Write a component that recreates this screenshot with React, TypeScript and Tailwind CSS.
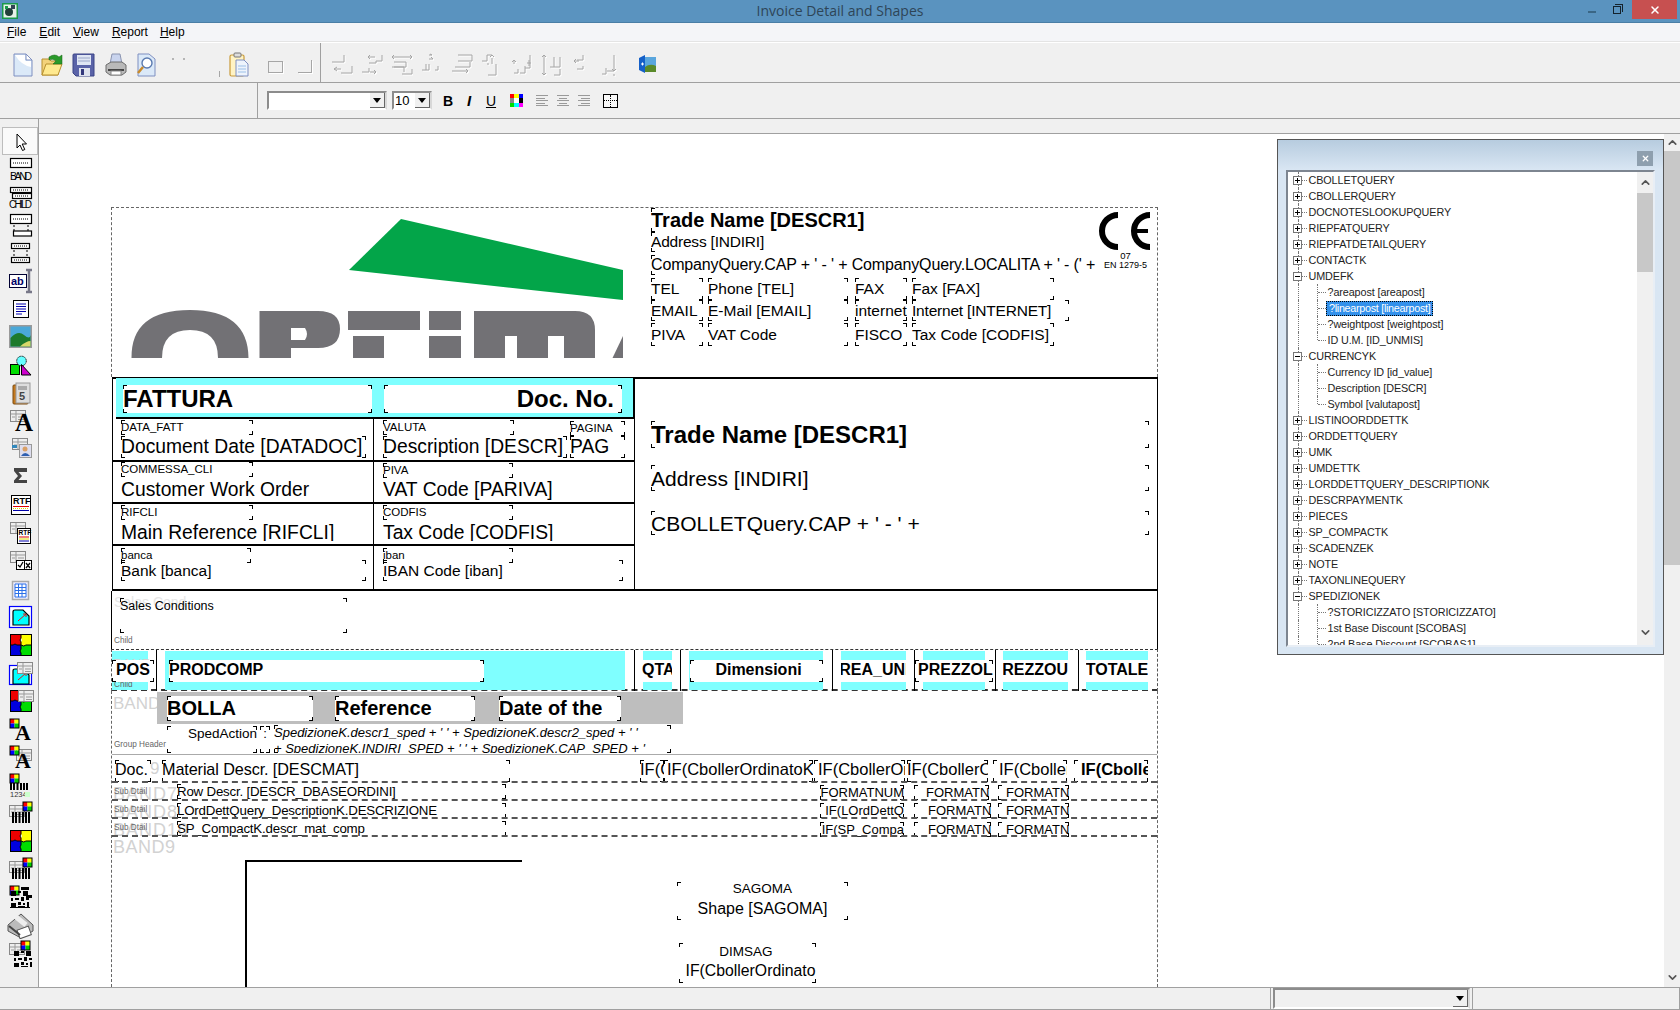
import type { ReactNode } from 'react'
import { ChevronUp, ChevronDown, X } from 'lucide-react'

// small pieces shared by the palette icons (28x28 cell)
const Form = ({ x, y }: { x: number; y: number }) => (
  <g transform={`translate(${x} ${y})`}>
    <rect x="0.5" y="0.5" width="15" height="11" fill="#eee" stroke="#888" />
    <path d="M1 4H15M6 1V11M8 7H14M2 7H5M8 9.5H14" stroke="#999" fill="none" />
  </g>
)
const Four = ({ x, y }: { x: number; y: number }) => (
  <g transform={`translate(${x} ${y})`}>
    <rect width="4.5" height="4.5" fill="#f00" />
    <rect x="4.5" width="4.5" height="4.5" fill="#ff0" />
    <rect y="4.5" width="4.5" height="4.5" fill="#00f" />
    <rect x="4.5" y="4.5" width="4.5" height="4.5" fill="#0c0" />
    <rect x="0" y="0" width="9" height="9" fill="none" stroke="#000" />
  </g>
)
const Puzzle = () => (
  <g>
    <path d="M4 3H15V7Q13 9 15 11V14H11Q9 12 7 14H4Z" fill="#e00" />
    <path d="M15 3H26V14H20Q18 16 15 14V11Q17 9 15 7Z" fill="#ff0" />
    <path d="M4 14H7Q9 12 11 14H15V25H4Z" fill="#00d" />
    <path d="M15 14Q18 16 20 14H26V25H15V22Q13 20 15 18Z" fill="#0d0" />
    <rect x="4.5" y="3.5" width="21" height="21" fill="none" stroke="#000" />
    <path d="M15 3V7Q13 9 15 11V14H11Q9 12 7 14H4M15 14Q18 16 20 14H26M15 14V18Q13 20 15 22V25" stroke="#000" fill="none" />
  </g>
)
const BigA = ({ x, y, s = 24 }: { x: number; y: number; s?: number }) => (
  <text x={x} y={y} fontSize={s} fontWeight="700" fontFamily="'Liberation Serif',serif" fill="#000">A</text>
)
const Bars = ({ x, y, h = 11 }: { x: number; y: number; h?: number }) => (
  <path
    transform={`translate(${x} ${y})`}
    d={`M1 0V${h}M4 0V${h}M7.5 0V${h}M11 0V${h}M14 0V${h}M17 0V${h}`}
    stroke="#000"
    strokeWidth="2"
  />
)
const Cyan = () => (
  <g>
    <path d="M7 9Q7 7 9 7H17L23 13V22H7Z" fill="#0ff" stroke="#000" strokeWidth="1.2" />
    <path d="M12 18L20 11M20 11H17M20 11V14" stroke="#e11" fill="none" />
  </g>
)
const Band = ({ y, x = 4, w = 22, h = 10 }: { y: number; x?: number; w?: number; h?: number }) => (
  <g>
    <rect x={x + 0.5} y={y + 0.5} width={w - 1} height={h - 1} fill="#fff" stroke="#000" strokeWidth="1.2" />
    <path d={`M${x + 3} ${y + h / 2}H${x + w - 3}`} stroke="#000" strokeDasharray="1 1" />
  </g>
)
const Qr = ({ x, y }: { x: number; y: number }) => (
  <path
    transform={`translate(${x} ${y})`}
    d="M0 0h5v5h-5zM7 0h3v2h-3zM12 0h5v5h-5zM0 7h2v3h-2zM4 7h4v2h-4zM10 6h3v4h-3zM15 7h3v2h-3zM0 12h5v5h-5zM7 11h3v3h-3zM12 12h2v2h-2zM16 11h2v6h-2zM7 15h7v2h-7z"
    fill="#000"
  />
)

const Cell = ({ children }: { children: ReactNode }) => (
  <svg width="28" height="28" viewBox="0 0 28 28">{children}</svg>
)

const PALETTE: ReactNode[] = [
  <path key="a" d="M11 7V21L14 18L16.5 23.5L18.8 22.5L16.2 17H20.5Z" fill="#fff" stroke="#000" />,
  <g key="b"><Band y={3} /><text x="4" y="25" fontSize="10.5" fontFamily="'Liberation Sans',sans-serif" textLength="22" fill="#000">BAND</text></g>,
  <g key="c"><Band y={4} h={6} /><Band x={6} w={20} y={10} h={6} /><text x="3" y="24.5" fontSize="10" fontFamily="'Liberation Sans',sans-serif" textLength="23" fill="#000">CHILD</text></g>,
  <g key="d"><Band y={3} h={10} /><path d="M8 14V20M22 14V20" stroke="#000" strokeDasharray="2 2" /><rect x="7.5" y="20" width="18" height="5" fill="#fff" stroke="#000" strokeWidth="1.2" /></g>,
  <g key="e"><Band x={5} w={19} y={4} h={6} /><path d="M8 11V18M21 11V18" stroke="#000" strokeDasharray="2 2" /><Band x={5} w={19} y={18} h={6} /></g>,
  <g key="f"><rect x="3.5" y="7.5" width="17" height="13" fill="#fff" stroke="#003" /><text x="5" y="18" fontSize="11" fontWeight="700" fontFamily="'Liberation Sans',sans-serif" fill="#006">ab</text><path d="M20 3H26M20 25H26M23 3V25" stroke="#778" strokeWidth="2.5" fill="none" /></g>,
  <g key="g"><rect x="7.5" y="5.5" width="15" height="17" fill="#fff" stroke="#000" /><path d="M10 9H20M10 11.5H20M10 14H20M10 16.5H20M10 19H16" stroke="#00a" /></g>,
  <g key="h"><rect x="3" y="2" width="23" height="23" fill="#9a9a9a" /><rect x="4.5" y="3.5" width="20" height="20" fill="#4aa8d8" /><path d="M4.5 15Q12 7 18 12T24.5 12V23.5H4.5Z" fill="#1d7a2c" /><path d="M14 23.5Q20 18 24.5 18V23.5Z" fill="#d8d86a" /></g>,
  <g key="i"><rect x="4.5" y="13.5" width="9" height="10" fill="#0d0" stroke="#000" /><circle cx="15.5" cy="10" r="4.8" fill="#6ff" stroke="#000" strokeDasharray="1 .6" /><path d="M15.5 13.5L25 24H15.5Z" fill="#c0c" stroke="#000" /></g>,
  <g key="j"><rect x="7" y="6" width="15" height="19" rx="1" fill="#c67a1e" stroke="#7a4a10" /><rect x="10" y="4" width="14" height="20" fill="#ddd" stroke="#999" /><text x="13" y="21" fontSize="11" fontWeight="700" fontFamily="'Liberation Sans',sans-serif" fill="#444">5</text><path d="M12 8H21M12 10H21" stroke="#777" /></g>,
  <g key="k"><Form x={4} y={3} /><BigA x={9} y={24} s={25} /></g>,
  <g key="l"><Form x={6} y={3} /><rect x="13.5" y="9.5" width="12" height="13" fill="#dde" stroke="#999" /><circle cx="19" cy="14" r="2.5" fill="#d9a066" /><path d="M15 21Q19 15 24 21Z" fill="#3060b0" /><rect x="6" y="10" width="5" height="3" fill="#38b" /></g>,
  <path key="m" d="M8 5H21V9L12.5 9L16 13L12.5 17H21V20H8V17.5L12 13L8 8Z" fill="#444" />,
  <g key="n"><rect x="5.5" y="4.5" width="19" height="19" fill="#fff" stroke="#000" /><text x="7" y="13" fontSize="9" fontWeight="700" fontFamily="'Liberation Sans',sans-serif" fill="#000">RTF</text><path d="M7 15.5H23" stroke="#d00" /><path d="M7 17.5H23" stroke="#dd0" strokeDasharray="1 1" /><path d="M7 19.5H23" stroke="#00a" /></g>,
  <g key="o"><Form x={4} y={3} /><rect x="11.5" y="9.5" width="13" height="15" fill="#fff" stroke="#000" /><text x="12.5" y="16" fontSize="6.5" fontWeight="700" fontFamily="'Liberation Sans',sans-serif" fill="#000">RTF</text><path d="M13 18H23" stroke="#d00" /><path d="M13 20H23" stroke="#dd0" /><path d="M13 22H23" stroke="#00a" /></g>,
  <g key="p"><Form x={4} y={4} /><rect x="10.5" y="13.5" width="8" height="9" fill="#fff" stroke="#000" /><rect x="18.5" y="13.5" width="7" height="9" fill="#fff" stroke="#000" /><path d="M12 18L14 20L17 15M20 16L24 21M24 16L20 21" stroke="#000" fill="none" strokeWidth="1.3" /></g>,
  <g key="q"><rect x="6.5" y="6.5" width="16" height="18" fill="#eef" stroke="#aaa" strokeWidth="1.5" /><path d="M9 9H20V22H9ZM9 12.5H20M9 15.5H20M9 18.5H20M12.5 9V22M16 9V22" stroke="#2a6fe8" fill="#fff" /></g>,
  <g key="r"><rect x="3.5" y="3.5" width="22" height="21" fill="#fff" stroke="#00f" strokeWidth="1.2" /><Cyan /></g>,
  <g key="s"><Puzzle /></g>,
  <g key="t"><rect x="3.5" y="6.5" width="22" height="19" fill="#fff" stroke="#00f" strokeWidth="1.2" /><g transform="translate(0 3)"><Cyan /></g><Form x={11} y={3} /></g>,
  <g key="u"><Puzzle /><Form x={12} y={3} /></g>,
  <g key="v"><Four x={4} y={4} /><BigA x={9} y={25} s={22} /></g>,
  <g key="w"><Form x={10} y={6} /><Four x={4} y={3} /><BigA x={9} y={25} s={22} /></g>,
  <g key="x"><Four x={4} y={3} /><Bars x={4} y={12} h={7} /><text x="4" y="26" fontSize="7.5" fontFamily="'Liberation Sans',sans-serif" fill="#333">1234</text><rect x="19" y="21" width="5" height="5" fill="#cfc" /></g>,
  <g key="y"><Form x={3} y={6} /><Bars x={6} y={13} /><Four x={17} y={3} /></g>,
  <g key="z"><Puzzle /></g>,
  <g key="aa"><Form x={3} y={6} /><Bars x={6} y={13} /><Four x={17} y={3} /></g>,
  <g key="ab"><Four x={4} y={3} /><Qr x={5} y={8} /><path d="M15 4h8v3h-8zM20 12h6v3h-6zM4 24h20v1H4z" fill="#000" /></g>,
  <g key="ac"><path d="M2 14L15 3L27 14V20L15 27L2 20Z" fill="#bbb" stroke="#555" /><path d="M10 6L20 14" stroke="#eee" strokeWidth="5" /><rect x="12" y="17" width="12" height="9" fill="#fff" stroke="#555" transform="rotate(-20 18 21)" /><path d="M3 15L14 24" stroke="#444" strokeWidth="2" /></g>,
  <g key="ad"><Form x={3} y={4} /><Qr x={8} y={12} /><Four x={15} y={2} /></g>,
]

// disabled alignment buttons, drawn with a white emboss behind the gray strokes
const ALIGN: string[] = [
  'M0 7H12V0M2 14H9M2 14L5 12M2 14L5 16M9 18H20V11',
  'M6 2H13M6 2L8 0M6 2L8 4M20 0V6H14V8H7M0 17H7V13M8 17H14M14 17L12 15M14 17L12 19',
  'M0 2H20M0 2L2 0M0 2L2 4M20 2L18 0M20 2L18 4M2 7H14V12H2M0 12H12V17M10 19H20V14',
  'M7 0H10M10 0L8 -1M7 4H11M11 4L9 2M0 15H7V9M4 9V15M16 11V15H13',
  'M6 0H20V6H6M0 16H16M16 16L14 14M16 16L14 18M3 12H18V7',
  'M0 6H5V0H10M10 0L8 2M10 0L12 2M10 3V9M6 8V10M14 9V20H6',
  'M2 5V9M2 5L0 7M2 5L4 7M2 18H6V14M8 18H13V11M13 13H18V0M15 8H19M17 5V11',
  'M2 0V20M2 0L0 2M2 0L4 2M2 20L0 18M2 20L4 18M8 12H18V2M12 2V12M18 14V20H12',
  'M2 6H7M2 6L4 4M2 6L4 8M11 0V5H5M11 11V14H5',
  'M4 13V19H0M12 0V16H5M12 16L10 14M12 16L14 14M12 19V21',
]
const Align = ({ d }: { d: string }) => (
  <svg width="22" height="24" viewBox="-1 -2 22 24" fill="none">
    <path d={d} stroke="#fff" transform="translate(1 1)" />
    <path d={d} stroke="#a6a6a6" />
  </svg>
)

const NewIcon = () => (
  <svg width="20" height="24" viewBox="0 0 20 24">
    <path d="M1 1H13L19 7V23H1Z" fill="#dbe9f8" stroke="#7f8fc0" />
    <path d="M13 1V7H19Z" fill="#fff" stroke="#7f8fc0" />
    <path d="M2 2H12V8H18V14Q8 12 2 2Z" fill="#fff" />
  </svg>
)
const OpenIcon = () => (
  <svg width="25" height="24" viewBox="0 0 25 24">
    <path d="M1 6H8L10 8H17V22H1Z" fill="#f3d27a" stroke="#b78f2f" />
    <path d="M1 22L5 11H21L17 22Z" fill="#ffe98f" stroke="#b78f2f" />
    <path d="M8 4Q14 0 18 4L21 2V11H12L15 8Q12 5 8 7Z" fill="#2a9a2a" stroke="#146014" strokeWidth=".5" />
  </svg>
)
const SaveIcon = () => (
  <svg width="23" height="24" viewBox="0 0 23 24">
    <path d="M1 2Q1 1 2 1H22V23H4L1 20Z" fill="#5a63a8" stroke="#3b4486" />
    <rect x="5" y="2" width="14" height="10" fill="#dfe6f4" />
    <path d="M6 5H18M6 8H18" stroke="#9aa6c8" />
    <rect x="7" y="15" width="11" height="8" fill="#dfe3ee" />
    <rect x="9" y="16" width="3" height="6" fill="#34397c" />
  </svg>
)
const PrintIcon = () => (
  <svg width="22" height="24" viewBox="0 0 22 24">
    <path d="M7 1H15L17 11H5Z" fill="#c9d4ee" stroke="#8a94b0" />
    <path d="M1 12L6 9H17L21 12V19L17 22H5L1 19Z" fill="#b9b9b9" stroke="#6c6c6c" />
    <path d="M3 17H19" stroke="#444" strokeWidth="2" />
    <rect x="6" y="18" width="10" height="4" fill="#fff" stroke="#888" />
  </svg>
)
const PreviewIcon = () => (
  <svg width="19" height="24" viewBox="0 0 19 24">
    <path d="M1 1H12L18 6V23H1Z" fill="#dbe9f8" stroke="#7f8fc0" />
    <circle cx="10" cy="10" r="5" fill="#fff" stroke="#5a7ab0" strokeWidth="1.4" />
    <path d="M6 14L1 20" stroke="#c98a2a" strokeWidth="2.5" />
  </svg>
)
const PasteIcon = () => (
  <svg width="20" height="25" viewBox="0 0 20 25">
    <rect x="1" y="3" width="14" height="21" rx="1.5" fill="#fff3c4" stroke="#c89a3a" strokeWidth="1.2" />
    <rect x="5" y="1" width="7" height="4" rx="1" fill="#ddd" stroke="#777" />
    <path d="M7 8H15L19 12V24H7Z" fill="#eef4fc" stroke="#7f8fc0" />
    <path d="M9 14H17M9 17H17M9 20H17" stroke="#9cc0e8" />
  </svg>
)
const DoorIcon = () => (
  <svg width="18" height="18" viewBox="0 0 18 18">
    <path d="M1 3L7 0V18L1 15Z" fill="#1560c8" />
    <rect x="7" y="2" width="11" height="15" fill="#5aa6dd" />
    <path d="M7 12Q12 8 18 11V17H7Z" fill="#5a8a2a" />
    <path d="M3 9H6M4.5 7.5V10.5" stroke="#fff" />
  </svg>
)

function Combo({ cls, children }: { cls: string; children?: ReactNode }) {
  return (
    <div className={`flex h-[19px] items-stretch border-2 border-[#8c8c8c] border-r-[#d8d8d8] border-b-[#fff] bg-white ${cls}`}>
      <div className="flex flex-1 items-center overflow-hidden pl-[1px] text-[13px] leading-none text-black">{children}</div>
      <ComboBtn />
    </div>
  )
}

function ComboBtn() {
  return (
    <div className="flex w-[15px] items-center justify-center border-r border-b border-[#666] bg-[#f0f0f0]">
      <span className="h-0 w-0 border-x-[4px] border-t-[5px] border-x-transparent border-t-black" />
    </div>
  )
}

const LeftCorners = () => (
  <>
    <span className="absolute left-0 top-0 h-[4px] w-[4px] border-l border-t border-black" />
    <span className="absolute bottom-0 left-0 h-[4px] w-[4px] border-b border-l border-black" />
  </>
)

const Corners = () => (
  <>
    <LeftCorners />
    <span className="absolute right-0 top-0 h-[4px] w-[4px] border-r border-t border-black" />
    <span className="absolute bottom-0 right-0 h-[4px] w-[4px] border-b border-r border-black" />
  </>
)

// one control on the report sheet, page coordinates in pos
function Ctl({ pos, cls = '', text, plain, left }: { pos: string; cls?: string; text: string; plain?: boolean; left?: boolean }) {
  return (
    <div className={`absolute flex items-center overflow-hidden whitespace-nowrap leading-none text-black ${pos} ${cls}`}>
      <span className="shrink-0">{text}</span>
      {left ? <LeftCorners /> : !plain && <Corners />}
    </div>
  )
}

const Ghost = ({ pos, text, cls = 'text-[17px]' }: { pos: string; text: string; cls?: string }) => (
  <div className={`absolute whitespace-nowrap leading-none text-[#d2d2d2] ${pos} ${cls}`}>{text}</div>
)

const Tiny = ({ pos, text }: { pos: string; text: string }) => (
  <div className={`absolute whitespace-nowrap text-[8.2px] leading-none text-[#666] ${pos}`}>{text}</div>
)

type Node = { t: string; k?: '+' | '-'; sel?: boolean; last?: boolean }
const TREE: Node[] = [
  { t: 'CBOLLETQUERY', k: '+' },
  { t: 'CBOLLERQUERY', k: '+' },
  { t: 'DOCNOTESLOOKUPQUERY', k: '+' },
  { t: 'RIEPFATQUERY', k: '+' },
  { t: 'RIEPFATDETAILQUERY', k: '+' },
  { t: 'CONTACTK', k: '+' },
  { t: 'UMDEFK', k: '-' },
  { t: '?areapost [areapost]' },
  { t: '?linearpost [linearpost]', sel: true },
  { t: '?weightpost [weightpost]' },
  { t: 'ID U.M. [ID_UNMIS]', last: true },
  { t: 'CURRENCYK', k: '-' },
  { t: 'Currency ID [id_value]' },
  { t: 'Description [DESCR]' },
  { t: 'Symbol [valutapost]', last: true },
  { t: 'LISTINOORDDETTK', k: '+' },
  { t: 'ORDDETTQUERY', k: '+' },
  { t: 'UMK', k: '+' },
  { t: 'UMDETTK', k: '+' },
  { t: 'LORDDETTQUERY_DESCRIPTIONK', k: '+' },
  { t: 'DESCRPAYMENTK', k: '+' },
  { t: 'PIECES', k: '+' },
  { t: 'SP_COMPACTK', k: '+' },
  { t: 'SCADENZEK', k: '+' },
  { t: 'NOTE', k: '+' },
  { t: 'TAXONLINEQUERY', k: '+' },
  { t: 'SPEDIZIONEK', k: '-' },
  { t: '?STORICIZZATO [STORICIZZATO]' },
  { t: '1st Base Discount [SCOBAS]' },
  { t: '2nd Base Discount [SCOBAS1]' },
]

function TreeRow({ n }: { n: Node }) {
  return (
    <div className="relative flex h-[16px] shrink-0 items-center whitespace-nowrap text-[10.8px] leading-none tracking-[-0.1px] text-[#222]">
      <span className="absolute left-[9.5px] top-0 h-full border-l border-dotted border-[#777]" />
      {n.k ? (
        <>
          <span className="relative ml-[5px] flex h-[9px] w-[9px] items-center justify-center border border-[#777] bg-white">
            <span className="h-px w-[5px] bg-black" />
            {n.k === '+' && <span className="absolute h-[5px] w-px bg-black" />}
          </span>
          <span className="w-[5px] border-t border-dotted border-[#777]" />
          <span className="ml-[1.5px]">{n.t}</span>
        </>
      ) : (
        <>
          <span className={`absolute left-[29px] top-0 border-l border-dotted border-[#777] ${n.last ? 'h-1/2' : 'h-full'}`} />
          <span className="ml-[30px] w-[8px] border-t border-dotted border-[#777]" />
          {n.sel ? (
            <span className="-my-px flex h-[15px] items-center border border-dotted border-black bg-[#3390ea] px-[2px] tracking-[-0.3px] text-white">{n.t}</span>
          ) : (
            <span className="ml-[1.5px]">{n.t}</span>
          )}
        </>
      )}
    </div>
  )
}

function ReportLogo() {
  return (
    <svg className="absolute left-[120px] top-[210px]" width="510" height="150" viewBox="120 210 510 150">
      <path d="M401 219L623 270V300L349 270Z" fill="#03a549" />
      <g fill="#727175">
        <path fillRule="evenodd" d="M131.5 358Q131 310 190 310Q248 310 248.5 358H218Q218 330 190 330Q162 330 162 358Z" />
        <path fillRule="evenodd" d="M259.5 311H318Q340 311 340 329Q340 348 318 348H291V358H259.5ZM291 328V340H305Q309 334 305 328Z" />
        <path d="M348 311H420V330H348ZM353 336H384V358H353Z" />
        <path d="M429 311H461V330H429ZM429 336H461V358H429Z" />
        <path d="M474 311H575Q595 311 595 330V358H564V336H505V358H474ZM517 336H548V358H517Z" />
        <path d="M612.5 358L623 336V358Z" />
      </g>
    </svg>
  )
}

function Sheet() {
  return (
    <div className="absolute left-[-39px] top-[-134px] h-[1010px] w-[1680px]">
      {/* band outlines */}
      <div className="absolute left-[111px] top-[207px] h-[170px] w-[1047px] border-x border-t border-dashed border-[#666]" />
      <ReportLogo />
      <div className="absolute left-[112px] top-[377px] h-[214px] w-[1046px] border-x border-y-2 border-black" />
      <div className="absolute left-[116px] top-[378px] h-[41px] w-[519px] border-r-2 border-b-2 border-black bg-[#7fffff]" />
      <div className="absolute left-[373px] top-[419px] h-[171px] w-px bg-black" />
      <div className="absolute left-[634px] top-[419px] h-[171px] w-px bg-black" />
      <div className="absolute left-[112px] top-[460px] h-[2px] w-[522px] bg-black" />
      <div className="absolute left-[112px] top-[502px] h-[2px] w-[522px] bg-black" />
      <div className="absolute left-[112px] top-[544px] h-[2px] w-[522px] bg-black" />

      {/* title block */}
      <Ctl pos="left-[651px] top-[208px] h-[24px] w-[445px]" cls="text-[20px] font-bold" text="Trade Name [DESCR1]" left />
      <Ctl pos="left-[651px] top-[232px] h-[20px] w-[441px]" cls="text-[15.5px] tracking-[-0.2px]" text="Address [INDIRI]" left />
      <Ctl pos="left-[651px] top-[255px] h-[20px] w-[448px]" cls="text-[16px] tracking-[-0.15px]" text="CompanyQuery.CAP + ' - ' + CompanyQuery.LOCALITA + ' - (' + " left />
      <Ctl pos="left-[651px] top-[278px] h-[22px] w-[52px]" cls="text-[15.5px]" text="TEL" />
      <Ctl pos="left-[708px] top-[278px] h-[22px] w-[140px]" cls="text-[15.5px]" text="Phone [TEL]" />
      <Ctl pos="left-[855px] top-[278px] h-[22px] w-[52px]" cls="text-[15.5px]" text="FAX" />
      <Ctl pos="left-[912px] top-[278px] h-[22px] w-[142px]" cls="text-[15.5px]" text="Fax [FAX]" />
      <Ctl pos="left-[651px] top-[300px] h-[21px] w-[52px]" cls="text-[15.5px]" text="EMAIL" />
      <Ctl pos="left-[708px] top-[300px] h-[21px] w-[140px]" cls="text-[15.5px]" text="E-Mail [EMAIL]" />
      <Ctl pos="left-[855px] top-[300px] h-[21px] w-[52px]" cls="text-[15.5px]" text="internet" />
      <Ctl pos="left-[912px] top-[300px] h-[21px] w-[157px]" cls="text-[15.5px] tracking-[-0.2px]" text="Internet [INTERNET]" />
      <Ctl pos="left-[651px] top-[323px] h-[23px] w-[52px]" cls="text-[15.5px]" text="PIVA" />
      <Ctl pos="left-[708px] top-[323px] h-[23px] w-[140px]" cls="text-[15.5px]" text="VAT Code" />
      <Ctl pos="left-[855px] top-[323px] h-[23px] w-[52px]" cls="text-[15.5px]" text="FISCO" />
      <Ctl pos="left-[912px] top-[323px] h-[23px] w-[142px]" cls="text-[15.5px]" text="Tax Code [CODFIS]" />

      <svg className="absolute left-[1097px] top-[212px]" width="54" height="38" viewBox="0 0 54 38" fill="none" stroke="#000" strokeWidth="6">
        <path d="M21 3A16 16 0 0 0 21 35M53 3A16 16 0 0 0 53 35" />
        <path d="M35 19H51" strokeWidth="4" />
      </svg>
      <Ctl pos="left-[1098px] top-[251px] h-[10px] w-[55px] justify-center" cls="text-[9.5px]" text="07" plain />
      <Ctl pos="left-[1098px] top-[260px] h-[10px] w-[55px] justify-center" cls="text-[9px]" text="EN 1279-5" plain />

      {/* address block on the right */}
      <Ctl pos="left-[651px] top-[421px] h-[27px] w-[498px]" cls="text-[24px] font-bold" text="Trade Name [DESCR1]" />
      <Ctl pos="left-[651px] top-[465px] h-[26px] w-[498px]" cls="text-[21px]" text="Address [INDIRI]" />
      <Ctl pos="left-[651px] top-[511px] h-[24px] w-[498px]" cls="text-[21px]" text="CBOLLETQuery.CAP + ' - ' + " />

      {/* document head */}
      <div className="absolute left-[123px] top-[385px] h-[28px] w-[249px] bg-white" />
      <div className="absolute left-[384px] top-[385px] h-[28px] w-[238px] bg-white" />
      <Ctl pos="left-[123px] top-[385px] h-[28px] w-[249px]" cls="text-[24px] font-bold" text="FATTURA" />
      <Ctl pos="left-[384px] top-[385px] h-[28px] w-[238px] justify-end pr-[8px]" cls="text-[24px] font-bold" text="Doc. No." />

      <Ctl pos="left-[121px] top-[420px] h-[15px] w-[132px]" cls="text-[11.5px]" text="DATA_FATT" />
      <Ctl pos="left-[121px] top-[436px] h-[22px] w-[245px]" cls="text-[19.3px]" text="Document Date [DATADOC]" />
      <Ctl pos="left-[383px] top-[420px] h-[15px] w-[131px]" cls="text-[11.5px]" text="VALUTA" />
      <Ctl pos="left-[383px] top-[436px] h-[22px] w-[184px]" cls="text-[19.3px]" text="Description [DESCR]" />
      <Ctl pos="left-[570px] top-[421px] h-[15px] w-[55px]" cls="text-[11.5px]" text="PAGINA" />
      <Ctl pos="left-[570px] top-[436px] h-[22px] w-[55px]" cls="text-[19.3px]" text="PAG" />

      <Ctl pos="left-[121px] top-[462px] h-[15px] w-[132px]" cls="text-[11.5px]" text="COMMESSA_CLI" />
      <Ctl pos="left-[121px] top-[479px] h-[21px] w-[245px]" cls="text-[19.3px]" text="Customer Work Order" plain />
      <Ctl pos="left-[383px] top-[463px] h-[15px] w-[130px]" cls="text-[11.5px]" text="PIVA" />
      <Ctl pos="left-[383px] top-[479px] h-[21px] w-[240px]" cls="text-[19.3px]" text="VAT Code [PARIVA]" plain />

      <Ctl pos="left-[121px] top-[505px] h-[15px] w-[132px]" cls="text-[11.5px]" text="RIFCLI" />
      <Ctl pos="left-[121px] top-[522px] h-[19px] w-[245px]" cls="items-start pt-[1px] text-[19.3px]" text="Main Reference [RIFCLI]" plain />
      <Ctl pos="left-[383px] top-[505px] h-[15px] w-[130px]" cls="text-[11.5px]" text="CODFIS" />
      <Ctl pos="left-[383px] top-[522px] h-[19px] w-[240px]" cls="items-start pt-[1px] text-[19.3px]" text="Tax Code [CODFIS]" plain />

      <Ctl pos="left-[121px] top-[548px] h-[15px] w-[130px]" cls="text-[11.5px]" text="banca" />
      <Ctl pos="left-[121px] top-[560px] h-[21px] w-[245px]" cls="text-[15.5px]" text="Bank [banca]" />
      <Ctl pos="left-[383px] top-[548px] h-[15px] w-[130px]" cls="text-[11.5px]" text="iban" />
      <Ctl pos="left-[383px] top-[560px] h-[21px] w-[240px]" cls="text-[15.5px]" text="IBAN Code [iban]" />

      {/* sales conditions */}
      <div className="absolute left-[111px] top-[591px] h-[59px] w-[1047px] border-x border-black" />
      <Ghost pos="left-[114px] top-[595px]" text="Sales Cond" cls="text-[14px] text-[#e6e6e6]" />
      <Ctl pos="left-[120px] top-[598px] h-[35px] w-[227px] items-start pt-[2px]" cls="text-[12.5px]" text="Sales Conditions" />
      <Tiny pos="left-[114px] top-[637px]" text="Child" />

      {/* column heads */}
      <div className="absolute left-[111px] top-[649px] h-[42px] w-[1047px] border-x border-b-2 border-t border-dashed border-[#333] border-x-[#555]" />
      <div className="absolute left-[112px] top-[651px] h-[39px] w-[36px] bg-[#7fffff]" />
      <div className="absolute left-[165px] top-[651px] h-[39px] w-[460px] bg-[#7fffff]" />
      <div className="absolute left-[643px] top-[651px] h-[39px] w-[29px] bg-[#7fffff]" />
      <div className="absolute left-[689px] top-[651px] h-[39px] w-[134px] bg-[#7fffff]" />
      <div className="absolute left-[841px] top-[651px] h-[39px] w-[65px] bg-[#7fffff]" />
      <div className="absolute left-[923px] top-[651px] h-[39px] w-[62px] bg-[#7fffff]" />
      <div className="absolute left-[1003px] top-[651px] h-[39px] w-[65px] bg-[#7fffff]" />
      <div className="absolute left-[1086px] top-[651px] h-[39px] w-[62px] bg-[#7fffff]" />
      <div className="absolute left-[156px] top-[650px] h-[41px] w-px bg-black" />
      <div className="absolute left-[634px] top-[650px] h-[41px] w-px bg-black" />
      <div className="absolute left-[680px] top-[650px] h-[41px] w-px bg-black" />
      <div className="absolute left-[832px] top-[650px] h-[41px] w-px bg-black" />
      <div className="absolute left-[914px] top-[650px] h-[41px] w-px bg-black" />
      <div className="absolute left-[995px] top-[650px] h-[41px] w-px bg-black" />
      <div className="absolute left-[1078px] top-[650px] h-[41px] w-px bg-black" />
      <Ghost pos="left-[113px] top-[657px]" text="BAND" cls="text-[14px]" />
      <Tiny pos="left-[114px] top-[681px]" text="Child" />
      <Ctl pos="left-[112px] top-[660px] h-[22px] w-[42px] justify-center bg-white pb-[2px]" cls="text-[16px] font-bold" text="POS" />
      <Ctl pos="left-[169px] top-[660px] h-[22px] w-[315px] bg-white pb-[2px]" cls="text-[16px] font-bold" text="PRODCOMP" />
      <Ctl pos="left-[642px] top-[660px] h-[22px] w-[30px] bg-white pb-[2px]" cls="text-[16px] font-bold" text="QTA" plain />
      <Ctl pos="left-[690px] top-[660px] h-[22px] w-[133px] justify-center bg-white pb-[2px] pl-[4px]" cls="text-[16px] font-bold" text="Dimensioni" />
      <Ctl pos="left-[841px] top-[660px] h-[22px] w-[65px] justify-center bg-white pb-[2px]" cls="text-[16px] font-bold" text="AREA_UNIT" plain />
      <Ctl pos="left-[915px] top-[660px] h-[22px] w-[78px] bg-white pb-[2px] pl-[3px]" cls="text-[16px] font-bold" text="PREZZOLORDO" />
      <Ctl pos="left-[1003px] top-[660px] h-[22px] w-[65px] justify-center bg-white pb-[2px]" cls="text-[16px] font-bold" text="PREZZOUN" plain />
      <Ctl pos="left-[1086px] top-[660px] h-[22px] w-[62px] justify-center bg-white pb-[2px]" cls="text-[16px] font-bold" text="TOTALE" plain />

      {/* group header */}
      <div className="absolute left-[111px] top-[691px] h-[296px] w-[1047px] border-x border-dashed border-[#666]" />
      <Ghost pos="left-[113px] top-[695px]" text="BAND" />
      <div className="absolute left-[157px] top-[692px] h-[32px] w-[526px] bg-[#bebebe]" />
      <Ctl pos="left-[167px] top-[696px] h-[25px] w-[146px] bg-white pb-[1px]" cls="text-[20px] font-bold" text="BOLLA" />
      <Ctl pos="left-[335px] top-[696px] h-[25px] w-[140px] bg-white pb-[1px]" cls="text-[20px] font-bold" text="Reference" />
      <Ctl pos="left-[499px] top-[696px] h-[25px] w-[122px] bg-white pb-[1px]" cls="text-[20px] font-bold" text="Date of the" />
      <Ctl pos="left-[167px] top-[726px] h-[27px] w-[90px] items-start justify-end pt-[1px]" cls="text-[13.5px]" text="SpedAction" />
      <Ctl pos="left-[260px] top-[726px] h-[27px] w-[10px] items-start justify-center pt-[1px]" cls="text-[13px]" text=":" />
      <div className="absolute left-[274px] top-[725px] h-[28px] w-[397px] overflow-hidden whitespace-nowrap text-[13px] italic leading-[16px] text-black">
        <Corners />
        <div>SpedizioneK.descr1_sped + ' ' + SpedizioneK.descr2_sped + ' '</div>
        <div>+ SpedizioneK.INDIRI_SPED + ' ' + SpedizioneK.CAP_SPED + '</div>
      </div>
      <Tiny pos="left-[114px] top-[741px]" text="Group Header" />
      <div className="absolute left-[112px] top-[754px] h-px w-[1045px] bg-[#aaa]" />

      {/* detail rows */}
      <Ghost pos="left-[150px] top-[760px]" text="9" />
      <Ctl pos="left-[115px] top-[760px] h-[22px] w-[36px] pb-[3px]" cls="text-[16px]" text="Doc." />
      <Ctl pos="left-[162px] top-[760px] h-[22px] w-[348px] pb-[3px]" cls="text-[16.2px] tracking-[-0.1px]" text="Material Descr. [DESCMAT]" />
      <Ctl pos="left-[640px] top-[760px] h-[22px] w-[24px] pb-[3px]" cls="text-[16.5px]" text="IF(CbollerOrdinatoK" />
      <Ctl pos="left-[664px] top-[760px] h-[22px] w-[149px] pb-[3px] pl-[3px]" cls="text-[16.5px]" text="IF(CbollerOrdinatoK." />
      <Ctl pos="left-[814px] top-[760px] h-[22px] w-[91px] pb-[3px] pl-[4px]" cls="text-[16.5px]" text="IF(CbollerOrdinatoK" />
      <Ctl pos="left-[907px] top-[760px] h-[22px] w-[81px] pb-[3px]" cls="text-[16.5px]" text="IF(CbollerOrdinatoK" />
      <Ctl pos="left-[993px] top-[760px] h-[22px] w-[74px] pb-[3px] pl-[6px]" cls="text-[16.5px]" text="IF(CbollerOrdinatoK" />
      <Ctl pos="left-[1074px] top-[760px] h-[22px] w-[74px] pb-[3px] pl-[7px]" cls="text-[16.5px] font-bold" text="IF(CbollerOrdinatoK" />
      <div className="absolute left-[112px] top-[781px] h-px w-[1045px] border-t-2 border-dashed border-[#555]" />

      <Ghost pos="left-[113px] top-[785px]" text="BAND7" cls="text-[18px] tracking-[1px]" />
      <Tiny pos="left-[114px] top-[788px]" text="Sub Dtail" />
      <Ctl pos="left-[177px] top-[784px] h-[15px] w-[329px]" cls="text-[13.3px] tracking-[-0.2px]" text="Row Descr. [DESCR_DBASEORDINI]" />
      <Ctl pos="left-[820px] top-[785px] h-[15px] w-[84px] justify-end" cls="text-[13px]" text="FORMATNUM" />
      <Ctl pos="left-[914px] top-[785px] h-[15px] w-[75px] pl-[12px]" cls="text-[13px]" text="FORMATNUM" />
      <Ctl pos="left-[998px] top-[785px] h-[15px] w-[71px] pl-[8px]" cls="text-[13px]" text="FORMATNUM" />
      <div className="absolute left-[112px] top-[799px] h-px w-[1045px] border-t-2 border-dashed border-[#555]" />

      <Ghost pos="left-[113px] top-[803px]" text="BAND8" cls="text-[18px] tracking-[1px]" />
      <Tiny pos="left-[114px] top-[806px]" text="Sub Dtail" />
      <Ctl pos="left-[177px] top-[803px] h-[15px] w-[329px]" cls="text-[13.3px] tracking-[-0.2px]" text="LOrdDettQuery_DescriptionK.DESCRIZIONE" />
      <Ctl pos="left-[820px] top-[803px] h-[15px] w-[84px] justify-end" cls="text-[13px]" text="IF(LOrdDettQ" />
      <Ctl pos="left-[914px] top-[803px] h-[15px] w-[77px] pl-[14px]" cls="text-[13px]" text="FORMATNUM" />
      <Ctl pos="left-[998px] top-[803px] h-[15px] w-[71px] pl-[8px]" cls="text-[13px]" text="FORMATNUM" />
      <div className="absolute left-[112px] top-[817px] h-px w-[1045px] border-t-2 border-dashed border-[#555]" />

      <Ghost pos="left-[113px] top-[821px]" text="BAND10" cls="text-[18px] tracking-[1px]" />
      <Tiny pos="left-[114px] top-[824px]" text="Sub Dtail" />
      <Ctl pos="left-[177px] top-[821px] h-[15px] w-[329px]" cls="text-[13.3px] tracking-[-0.2px]" text="SP_CompactK.descr_mat_comp" />
      <Ctl pos="left-[820px] top-[822px] h-[15px] w-[84px] justify-end" cls="text-[13px]" text="IF(SP_Compa" />
      <Ctl pos="left-[914px] top-[822px] h-[15px] w-[77px] pl-[14px]" cls="text-[13px]" text="FORMATNUM" />
      <Ctl pos="left-[998px] top-[822px] h-[15px] w-[71px] pl-[8px]" cls="text-[13px]" text="FORMATNUM" />
      <div className="absolute left-[112px] top-[835px] h-px w-[1045px] border-t-2 border-dashed border-[#555]" />

      <Ghost pos="left-[113px] top-[838px]" text="BAND9" cls="text-[18px] tracking-[0.5px]" />
      <div className="absolute left-[245px] top-[860px] h-[127px] w-[277px] border-l-2 border-t-2 border-black" />
      <div className="absolute left-[677px] top-[882px] flex h-[38px] w-[171px] flex-col items-center whitespace-nowrap leading-none text-black">
        <Corners />
        <span className="text-[13.5px]">SAGOMA</span>
        <span className="mt-[5px] text-[16px]">Shape [SAGOMA]</span>
      </div>
      <div className="absolute left-[679px] top-[943px] flex h-[40px] w-[137px] flex-col items-center overflow-hidden pl-[6px] pt-[2px] whitespace-nowrap leading-none text-black">
        <Corners />
        <span className="pr-[9px] text-[13.5px]">DIMSAG</span>
        <span className="mt-[4px] text-[15.8px]">IF(CbollerOrdinato</span>
      </div>
    </div>
  )
}

function FloatPanel() {
  return (
    <div className="absolute left-[1238px] top-[5px] flex h-[516px] w-[387px] flex-col border border-[#555] bg-gradient-to-b from-[#b7ccdf] to-[#d9e6f3] to-[30px]">
      <div className="flex h-[30px] shrink-0 items-end justify-end pr-[10px] pb-[4px]">
        <div className="flex h-[15px] w-[16px] items-center justify-center bg-[#8e9fae]">
          <X size={9} strokeWidth={3.5} className="text-white" />
        </div>
      </div>
      <div className="mx-[8px] flex h-[477px] overflow-hidden border-2 border-[#7d8590] border-r-[#e8eef5] border-b-[#e8eef5] bg-white">
        <div className="flex flex-1 flex-col overflow-hidden">
          {TREE.map(n => (
            <TreeRow key={n.t} n={n} />
          ))}
        </div>
        <div className="flex w-[16px] shrink-0 flex-col items-center bg-[#f0f0f0]">
          <ChevronUp size={13} strokeWidth={3} className="my-[4px] shrink-0 text-[#555]" />
          <div className="h-[79px] w-full bg-[#c8c8c8]" />
          <div className="flex-1" />
          <ChevronDown size={13} strokeWidth={3} className="mb-[6px] shrink-0 text-[#555]" />
        </div>
      </div>
    </div>
  )
}

export default function App() {
  return (
    <div className="flex h-[1010px] w-[1680px] flex-col overflow-hidden bg-[#f0f0f0] [font-family:'Liberation_Sans',Arial,sans-serif]">
      {/* title bar */}
      <div className="relative flex h-[23px] shrink-0 items-center justify-center border-b border-[#4a7ea6] bg-[#5a93bf]">
        <svg className="absolute left-[2px] top-[3px]" width="16" height="16" viewBox="0 0 16 16">
          <rect width="16" height="16" fill="#1a9a4a" />
          <rect x="1.5" y="1.5" width="13" height="13" fill="#e8f2e8" />
          <circle cx="7" cy="9" r="4" fill="#23403a" />
          <rect x="9" y="2" width="4" height="4" fill="#345" />
          <rect x="3" y="3" width="3" height="3" fill="#1a9a4a" />
        </svg>
        <span className="text-[14px] leading-none text-[#2e4557] [font-family:'Open_Sans',sans-serif]">Invoice Detail and Shapes</span>
        <span className="absolute left-[1588px] top-[11px] h-[2px] w-[8px] bg-[#3a6685]" />
        <span className="absolute left-[1613px] top-[6px] h-[8px] w-[8px] border border-[#14222c]" />
        <span className="absolute left-[1615px] top-[4px] h-[8px] w-[8px] border-r border-t border-[#14222c]" />
        <div className="absolute left-[1632px] top-0 flex h-[19px] w-[45px] items-center justify-center bg-[#c75050]">
          <X size={12} strokeWidth={3} className="text-white" />
        </div>
      </div>

      {/* menu */}
      <div className="flex h-[18px] shrink-0 items-center bg-[#f4f5f8] text-[12px] leading-none text-black">
        <span className="ml-[7px]"><u>F</u>ile</span>
        <span className="ml-[13px]"><u>E</u>dit</span>
        <span className="ml-[13px]"><u>V</u>iew</span>
        <span className="ml-[13px]"><u>R</u>eport</span>
        <span className="ml-[12px]"><u>H</u>elp</span>
      </div>
      <div className="h-[2px] shrink-0 border-b border-white bg-[#e4e4e4]" />

      {/* main toolbar */}
      <div className="flex h-[40px] shrink-0 items-center border-b border-[#a0a0a0]">
        <div className="ml-[13px] mt-[4px] flex items-center">
          <NewIcon />
          <div className="ml-[8px]"><OpenIcon /></div>
          <div className="ml-[6px]"><SaveIcon /></div>
          <div className="ml-[10px]"><PrintIcon /></div>
          <div className="ml-[10px]"><PreviewIcon /></div>
          <div className="ml-[16px] mb-[12px] flex w-[13px] justify-between">
            <span className="h-[2px] w-[2px] bg-[#b5b5b5]" />
            <span className="h-[2px] w-[2px] bg-[#b5b5b5]" />
          </div>
          <span className="ml-[34px] mt-[18px] h-[6px] w-px bg-[#a6a6a6]" />
          <div className="ml-[9px]"><PasteIcon /></div>
          <span className="ml-[19px] mt-[4px] h-[12px] w-[15px] border border-[#a6a6a6] shadow-[1px_1px_0_#fff]" />
          <span className="ml-[15px] mt-[4px] h-[13px] w-[14px] border-b border-r border-[#a6a6a6] shadow-[1px_1px_0_#fff]" />
        </div>
        <span className="ml-[8px] h-full w-px bg-[#a0a0a0]" />
        <div className="ml-[10px] mt-[4px] flex items-center gap-[8px]">
          {ALIGN.map(d => (
            <Align key={d} d={d} />
          ))}
        </div>
        <div className="ml-[15px] mt-[3px]"><DoorIcon /></div>
      </div>

      {/* format toolbar */}
      <div className="flex h-[36px] shrink-0 items-center border-b border-[#a0a0a0]">
        <span className="ml-[257px] h-full w-px bg-[#a0a0a0]" />
        <Combo cls="ml-[9px] w-[120px]" />
        <Combo cls="ml-[5px] w-[40px]">10</Combo>
        <button className="ml-[6px] w-[20px] text-[14px] font-bold leading-none text-black">B</button>
        <button className="ml-[1px] w-[20px] text-[15px] font-bold italic leading-none text-black">I</button>
        <button className="ml-[2px] w-[20px] text-[14px] leading-none text-black underline">U</button>
        <div className="ml-[9px] grid h-[13px] w-[13px] grid-cols-3 bg-[#333]">
          <span className="bg-[#f00]" />
          <span className="bg-[#ff0]" />
          <span className="bg-[#00f]" />
          <span className="bg-[#888]" />
          <span className="bg-white" />
          <span className="bg-black" />
          <span className="bg-[#0d0]" />
          <span className="bg-[#0ff]" />
          <span className="bg-[#f0f]" />
        </div>
        <div className="ml-[13px] flex h-[11px] w-[12px] flex-col justify-between">
          <span className="h-px w-full bg-[#9a9a9a]" />
          <span className="h-px w-[9px] bg-[#9a9a9a]" />
          <span className="h-px w-full bg-[#9a9a9a]" />
          <span className="h-px w-[9px] bg-[#9a9a9a]" />
          <span className="h-px w-full bg-[#9a9a9a]" />
        </div>
        <div className="ml-[9px] flex h-[11px] w-[12px] flex-col items-center justify-between">
          <span className="h-px w-full bg-[#9a9a9a]" />
          <span className="h-px w-[8px] bg-[#9a9a9a]" />
          <span className="h-px w-full bg-[#9a9a9a]" />
          <span className="h-px w-[8px] bg-[#9a9a9a]" />
          <span className="h-px w-full bg-[#9a9a9a]" />
        </div>
        <div className="ml-[9px] flex h-[11px] w-[12px] flex-col items-end justify-between">
          <span className="h-px w-full bg-[#9a9a9a]" />
          <span className="h-px w-[9px] bg-[#9a9a9a]" />
          <span className="h-px w-full bg-[#9a9a9a]" />
          <span className="h-px w-[9px] bg-[#9a9a9a]" />
          <span className="h-px w-full bg-[#9a9a9a]" />
        </div>
        <div className="relative ml-[13px] flex h-[14px] w-[15px] items-center justify-center border border-black bg-[#f8f8f8]">
          <span className="absolute h-full border-l border-dotted border-black" />
          <span className="absolute w-full border-t border-dotted border-black" />
        </div>
      </div>

      {/* body */}
      <div className="flex min-h-0 flex-1">
        <div className="flex w-[39px] shrink-0 flex-col overflow-hidden border-r border-[#a0a0a0] pl-[2px] pt-[8px]">
          {PALETTE.map((icon, i) => (
            <div
              key={i}
              className={`flex h-[28px] shrink-0 items-center justify-center ${i === 0 ? 'border border-[#bdbdbd] bg-[#fafafa]' : ''}`}
            >
              <Cell>{icon}</Cell>
            </div>
          ))}
        </div>
        <div className="flex min-w-0 flex-1 flex-col">
          <div className="h-[15px] shrink-0 border-b border-[#a0a0a0]" />
          <div className="flex min-h-0 flex-1">
            <div className="relative flex-1 overflow-hidden bg-white">
              <Sheet />
              <FloatPanel />
            </div>
            <div className="flex w-[16px] shrink-0 flex-col items-center bg-[#f0f0f0]">
              <ChevronUp size={13} strokeWidth={3} className="my-[2px] shrink-0 text-[#555]" />
              <div className="h-[414px] w-full bg-[#c8c8c8]" />
              <div className="flex-1" />
              <ChevronDown size={13} strokeWidth={3} className="mb-[3px] shrink-0 text-[#555]" />
            </div>
          </div>
        </div>
      </div>

      {/* status bar */}
      <div className="flex h-[23px] shrink-0 border-y border-[#a0a0a0]">
        <div className="w-[1271px] border-r border-[#a0a0a0]" />
        <div className="ml-[2px] flex w-[197px] items-stretch border-2 border-[#8c8c8c] border-r-[#d8d8d8] border-b-[#fff]">
          <div className="flex-1" />
          <ComboBtn />
        </div>
        <div className="ml-[2px] flex-1 border-x border-[#a0a0a0]" />
      </div>
    </div>
  )
}
